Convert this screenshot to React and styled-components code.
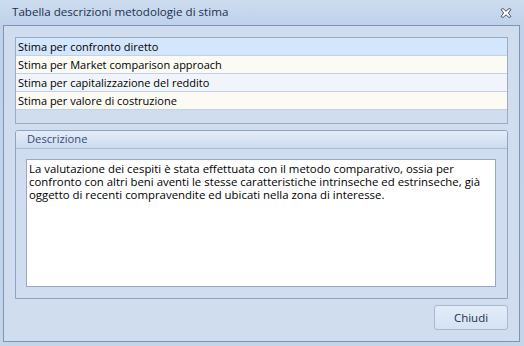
import React from 'react';
import styled, { createGlobalStyle } from 'styled-components';

const rows = [
	'Stima per confronto diretto',
	'Stima per Market comparison approach',
	'Stima per capitalizzazione del reddito',
	'Stima per valore di costruzione',
];

const rowColors = ['#d4e6fc', '#fbfbf3', '#f1f5fb', '#fbfbf3'];

const description =
	'La valutazione dei cespiti è stata effettuata con il metodo comparativo, ossia per confronto con altri beni aventi le stesse caratteristiche intrinseche ed estrinseche, già oggetto di recenti compravendite ed ubicati nella zona di interesse.';

const App = () => {
	return (
		<>
			<GlobalStyle />
			<Window>
				<TitleBar>
					<Title>Tabella descrizioni metodologie di stima</Title>
					<CloseButton aria-label='chiudi'>
						<svg width='12' height='10' viewBox='0 0 12 10'>
							<path
								d='M1 1.5 L3 0.5 L6 3.2 L9 0.5 L11 1.5 L8.3 5 L11 8.5 L9 9.5 L6 6.8 L3 9.5 L1 8.5 L3.7 5 Z'
								fill='#ffffff'
								stroke='#4a5568'
								strokeWidth='1'
								strokeLinejoin='round'
							/>
						</svg>
					</CloseButton>
				</TitleBar>
				<Frame>
					<ListBox>
						{rows.map((r, i) => (
							<Row key={r} $bg={rowColors[i]}>
								{r}
							</Row>
						))}
					</ListBox>
					<Group>
						<GroupHeader>Descrizione</GroupHeader>
						<GroupBody>
							<TextArea>{description}</TextArea>
						</GroupBody>
					</Group>
					<Footer>
						<Button>Chiudi</Button>
					</Footer>
				</Frame>
			</Window>
		</>
	);
};

const GlobalStyle = createGlobalStyle`
	html, body {
		margin: 0;
		padding: 0;
		background: #c4d5ea;
	}
	body {
		font-family: 'Open Sans', 'Noto Sans', sans-serif;
	}
`;

const Window = styled.div`
	width: 524px;
	height: 346px;
	box-sizing: border-box;
	display: flex;
	flex-direction: column;
	background: linear-gradient(to bottom, #cddcef 0%, #bfd2ea 25px, #c4d5ea 100%);
	padding: 0 4px 4px 3px;
`;

const TitleBar = styled.div`
	height: 25px;
	display: flex;
	align-items: center;
	justify-content: space-between;
	padding: 0 9px 2px 9px;
	box-sizing: border-box;
`;

const Title = styled.span`
	font-size: 11.6px;
	color: #1e2f4d;
`;

const CloseButton = styled.div`
	display: flex;
	align-items: center;
	margin-top: 3px;
	margin-right: -1px;
`;

const Frame = styled.div`
	flex: 1;
	display: flex;
	flex-direction: column;
	background: #d0ddee;
	border: 1px solid #7f93b3;
	padding: 11px;
`;

const ListBox = styled.div`
	height: 87px;
	box-sizing: border-box;
	border: 1px solid #9aabc8;
	background: #d0ddee;
	display: flex;
	flex-direction: column;
	margin-bottom: 6px;
`;

const Row = styled.div`
	height: 18px;
	box-sizing: border-box;
	border-bottom: 1px solid #c1d1ea;
	background: ${(p) => p.$bg};
	font-size: 11px;
	line-height: 17px;
	padding-left: 2px;
	color: #000;
	white-space: nowrap;
`;

const Group = styled.div`
	height: 169px;
	box-sizing: border-box;
	border: 1px solid #8ea3c4;
	border-radius: 3px 3px 0 0;
	display: flex;
	flex-direction: column;
	margin-bottom: 6px;
`;

const GroupHeader = styled.div`
	height: 18px;
	box-sizing: border-box;
	border-bottom: 1px solid #a8bad5;
	background: linear-gradient(to bottom, #e4edf9, #ccdbf0);
	font-size: 11.2px;
	line-height: 16px;
	padding-left: 11px;
	color: #3a4a6e;
	border-radius: 2px 2px 0 0;
`;

const GroupBody = styled.div`
	flex: 1;
	padding: 10px 11px 11px 10px;
	display: flex;
`;

const TextArea = styled.div`
	flex: 1;
	background: #fff;
	border: 1px solid #97a9c6;
	padding: 2px 2px;
	font-size: 11.4px;
	line-height: 13px;
	color: #000;
`;

const Footer = styled.div`
	display: flex;
	justify-content: flex-end;
`;

const Button = styled.div`
	width: 74px;
	height: 25px;
	box-sizing: border-box;
	border: 1px solid #a9b9d2;
	border-radius: 3px;
	background: linear-gradient(to bottom, #e3edf9, #d4e2f3);
	display: flex;
	align-items: center;
	justify-content: center;
	font-size: 11.5px;
	color: #1e2f4d;
`;

export default App;
